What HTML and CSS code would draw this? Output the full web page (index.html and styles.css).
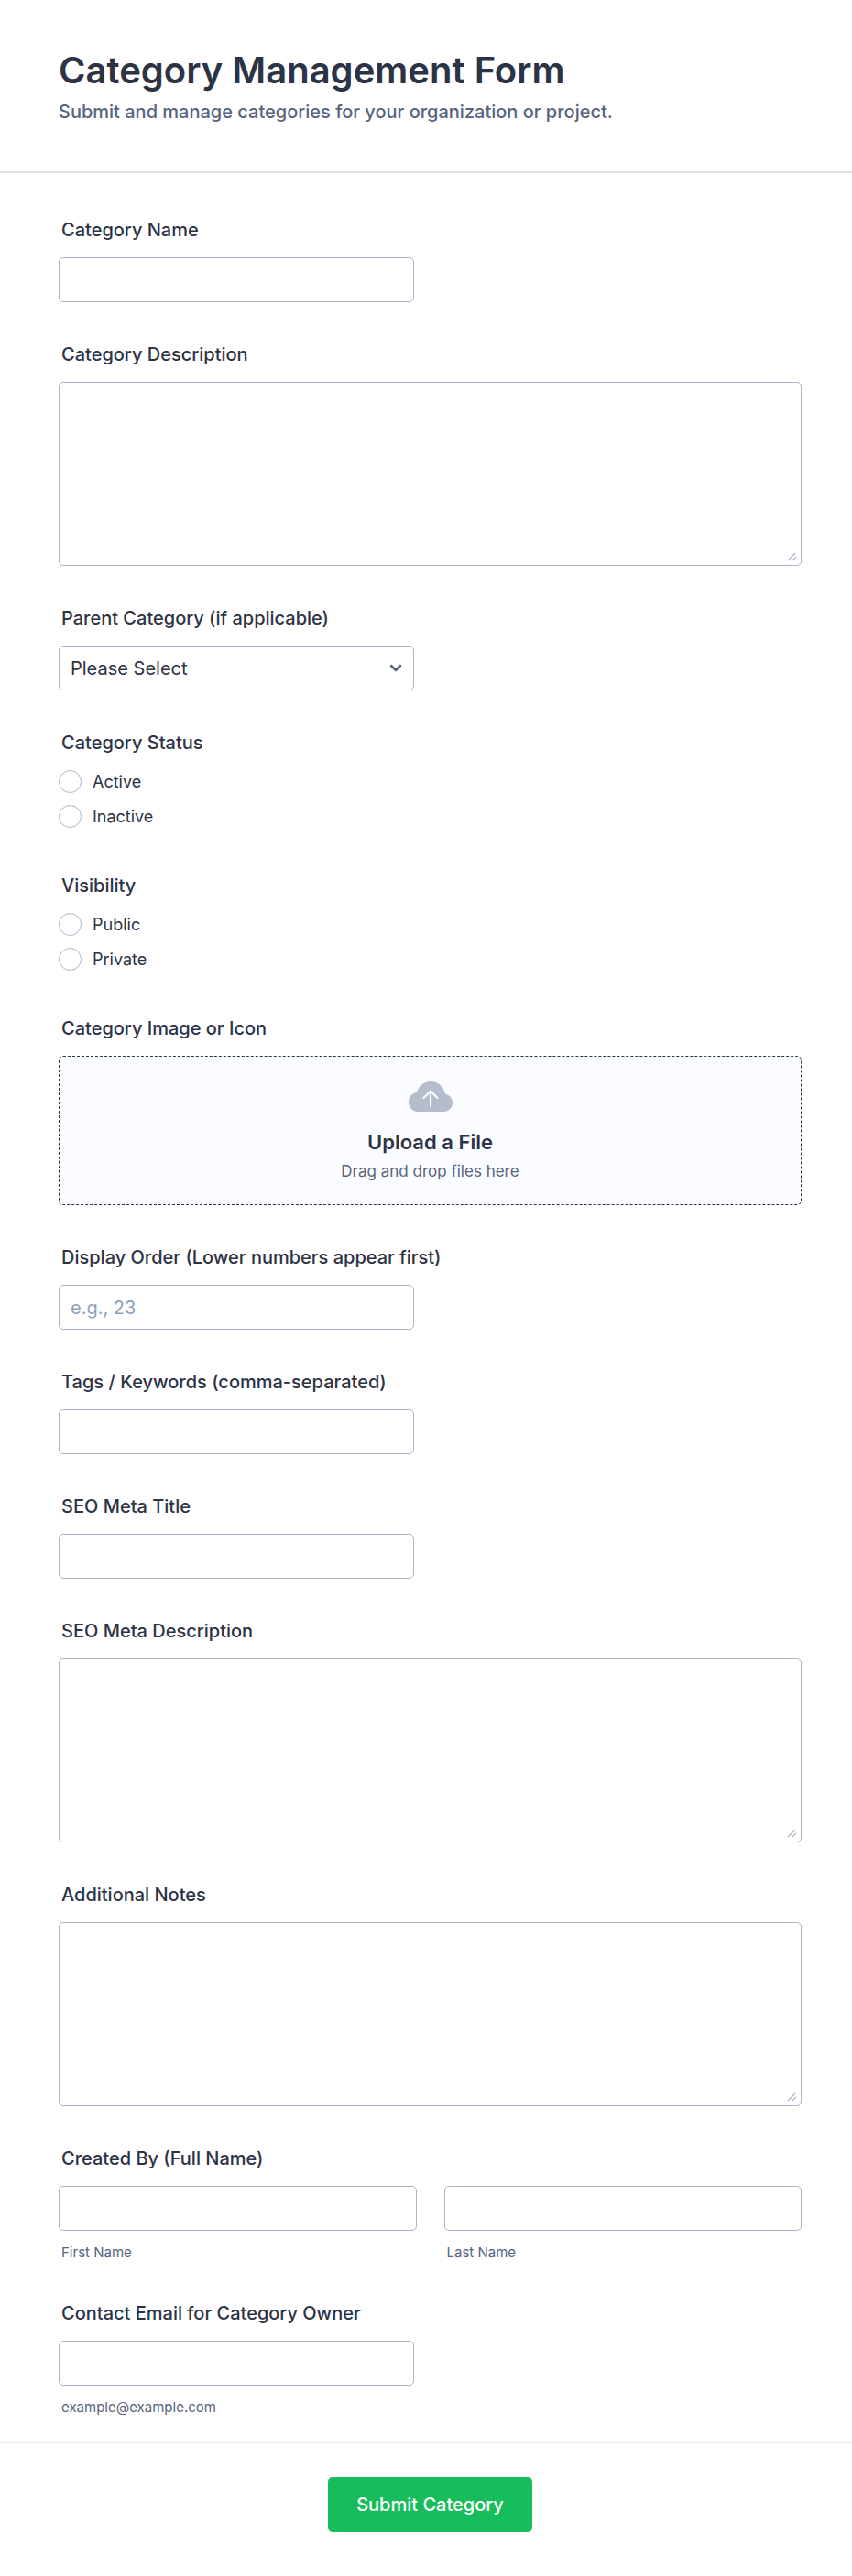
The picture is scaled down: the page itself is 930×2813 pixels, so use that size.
FILE: index.html
```html
<!DOCTYPE html>
<html lang="en">
<head>
  <meta charset="UTF-8">
  <meta name="viewport" content="width=device-width, initial-scale=1.0">
  <title>Category Management Form</title>
  <link rel="stylesheet" href="styles.css">
</head>
<body>
  <form class="form">
    <header class="form-header">
      <h1>Category Management Form</h1>
      <p>Submit and manage categories for your organization or project.</p>
    </header>

    <div class="fields">
      <div class="field">
        <label class="label" for="name">Category Name</label>
        <input class="control half" type="text" id="name">
      </div>

      <div class="field">
        <label class="label" for="description">Category Description</label>
        <textarea class="control area" id="description"></textarea>
      </div>

      <div class="field">
        <label class="label" for="parent">Parent Category (if applicable)</label>
        <div class="select half">
          <select class="control" id="parent">
            <option>Please Select</option>
          </select>
          <svg class="chevron" width="14" height="9" viewBox="0 0 14 9" fill="none" stroke="#57647e" stroke-width="2.5" stroke-linecap="round" stroke-linejoin="round"><path d="M2 2l5 5 5-5"/></svg>
        </div>
      </div>

      <fieldset class="field choices">
        <legend class="label">Category Status</legend>
        <label class="choice"><input type="radio" name="status" value="active">Active</label>
        <label class="choice"><input type="radio" name="status" value="inactive">Inactive</label>
      </fieldset>

      <fieldset class="field choices">
        <legend class="label">Visibility</legend>
        <label class="choice"><input type="radio" name="visibility" value="public">Public</label>
        <label class="choice"><input type="radio" name="visibility" value="private">Private</label>
      </fieldset>

      <div class="field">
        <span class="label">Category Image or Icon</span>
        <button class="upload" type="button">
          <svg class="cloud" width="48" height="33" viewBox="0 0 48 33">
            <path fill="#b5bccb" d="M10 33C4.500 33 0 28.500 0 22.500c0-5.500 4-10 9-10.700C11 5 17 0 24 0c8 0 15 6 16 13.700 4.500.7 8 4.700 8 9.500 0 5.300-4.300 9.800-9.700 9.800z"/>
            <path fill="none" stroke="#fff" stroke-width="2" d="M24 28V11M16 18.500l8-8 8 8"/>
          </svg>
          <span class="upload-title">Upload a File</span>
          <span class="upload-text">Drag and drop files here</span>
        </button>
      </div>

      <div class="field">
        <label class="label" for="order">Display Order (Lower numbers appear first)</label>
        <input class="control half" type="text" inputmode="numeric" id="order" placeholder="e.g., 23">
      </div>

      <div class="field">
        <label class="label" for="tags">Tags / Keywords (comma-separated)</label>
        <input class="control half" type="text" id="tags">
      </div>

      <div class="field">
        <label class="label" for="seo-title">SEO Meta Title</label>
        <input class="control half" type="text" id="seo-title">
      </div>

      <div class="field">
        <label class="label" for="seo-description">SEO Meta Description</label>
        <textarea class="control area" id="seo-description"></textarea>
      </div>

      <div class="field">
        <label class="label" for="notes">Additional Notes</label>
        <textarea class="control area" id="notes"></textarea>
      </div>

      <fieldset class="field with-hint">
        <legend class="label">Created By (Full Name)</legend>
        <div class="name-row">
          <div>
            <input class="control" type="text" id="first-name">
            <label class="hint" for="first-name">First Name</label>
          </div>
          <div>
            <input class="control" type="text" id="last-name">
            <label class="hint" for="last-name">Last Name</label>
          </div>
        </div>
      </fieldset>

      <div class="field with-hint">
        <label class="label" for="email">Contact Email for Category Owner</label>
        <input class="control half" type="email" id="email" aria-describedby="email-hint">
        <span class="hint" id="email-hint">example@example.com</span>
      </div>
    </div>

    <footer class="form-footer">
      <button class="submit" type="submit">Submit Category</button>
    </footer>
  </form>
</body>
</html>
```
FILE: styles.css
```css
* {
  box-sizing: border-box;
}
body {
  margin: 0;
  background-color: #fff;
  color: #2c3345;
  font-family: Inter, sans-serif;
  font-size: 20px;
}
input, select, textarea, button {
  font: inherit;
  color: inherit;
}

.form-header {
  padding: 52px 64px 53px;
  border-bottom: 2px solid #dfe4eb;
}
.form-header h1 {
  margin: 0;
  font-size: 40px;
  font-weight: 600;
  line-height: 50px;
}
.form-header p {
  margin: 8px 0 0;
  color: #57647e;
  font-weight: 500;
  line-height: 24px;
}

.fields {
  padding: 50px 55px 28px 64px;
}
.field {
  margin: 0 0 45px;
  padding: 0;
  border: 0;
  min-width: 0;
}
.label {
  display: block;
  margin-bottom: 18px;
  padding: 0 3px;
  font-weight: 500;
  line-height: 24px;
}
.control {
  display: block;
  width: 100%;
  height: 49px;
  padding: 0 12px;
  border: 1px solid #adb4c5;
  border-radius: 5px;
  background-color: #fff;
}
.control::placeholder {
  color: #8da3b8;
  opacity: 1;
}
.half {
  max-width: 388px;
}
.area {
  height: 201px;
  padding: 12px;
  resize: vertical;
}
.area::-webkit-resizer {
  background: url("data:image/svg+xml,%3Csvg xmlns='http://www.w3.org/2000/svg' width='15' height='15' fill='none' stroke='%23adb4c5' stroke-width='1.3'%3E%3Cpath d='M1 10l8-8M6 10l4-4'/%3E%3C/svg%3E") no-repeat;
}

.select {
  position: relative;
}
.select .control {
  appearance: none;
}
.chevron {
  position: absolute;
  top: 20px;
  right: 13px;
  pointer-events: none;
}

.choices {
  margin-bottom: 51px;
}
.choice {
  display: flex;
  align-items: center;
  gap: 12px;
  width: fit-content;
  height: 25px;
  font-size: 18px;
}
.choice + .choice {
  margin-top: 13px;
}
.choice input {
  appearance: none;
  width: 25px;
  height: 25px;
  margin: 0;
  border: 1px solid #adb4c5;
  border-radius: 50%;
}
.choice input:checked {
  border: 8px solid #2c3345;
}

.upload {
  display: flex;
  flex-direction: column;
  align-items: center;
  width: 100%;
  padding: 27px 12px 24px;
  border: 1px dashed #2c3345;
  border-radius: 5px;
  background-color: #fafcff;
  cursor: pointer;
}
.upload-title {
  margin-top: 19px;
  font-size: 22px;
  font-weight: 600;
  line-height: 28px;
}
.upload-text {
  margin-top: 6px;
  color: #57647e;
  font-size: 17px;
  line-height: 24px;
}

.name-row {
  display: grid;
  grid-template-columns: 1fr 1fr;
  gap: 30px;
}
.hint {
  display: block;
  margin-top: 14px;
  padding: 0 3px;
  color: #57647e;
  font-size: 15px;
  line-height: 20px;
}
.with-hint {
  margin-bottom: 44px;
}
.with-hint:last-child {
  margin-bottom: 0;
}

.form-footer {
  display: flex;
  justify-content: center;
  padding: 37px 55px 48px 64px;
  border-top: 1px solid #e6ebf1;
}
.submit {
  height: 60px;
  padding: 0 31px;
  border: 0;
  border-radius: 5px;
  background-color: #18bd5b;
  color: #fff;
  font-weight: 500;
  cursor: pointer;
}
```
